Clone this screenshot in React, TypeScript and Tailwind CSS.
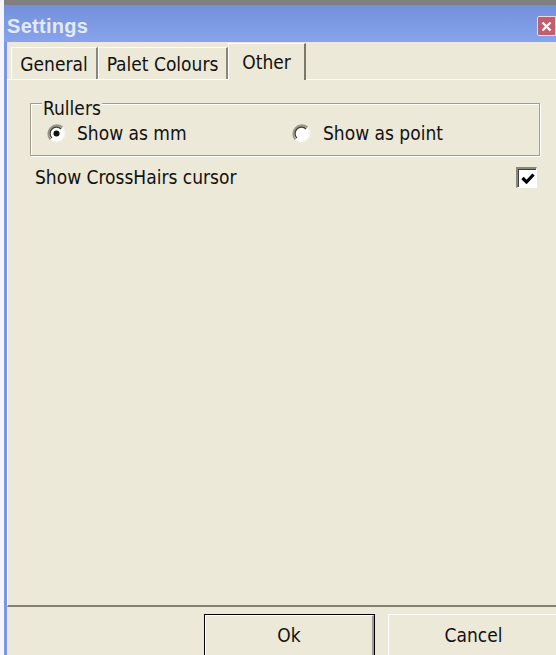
import React from 'react'

const ui = { fontFamily: '"DejaVu Sans Condensed", "Liberation Sans", sans-serif' }

function Radio({ checked }: { checked?: boolean }) {
  return (
    <svg width="19" height="19" viewBox="0 0 19 19" className="shrink-0">
      <circle cx="9.5" cy="9.5" r="8.5" fill="#fff" />
      {/* sunken rim: dark upper-left, light lower-right */}
      <path d="M3.5 15.5 A8.5 8.5 0 0 1 15.5 3.5" fill="none" stroke="#9a9788" strokeWidth="2" />
      <path d="M4.9 14.1 A6.5 6.5 0 0 1 14.1 4.9" fill="none" stroke="#404040" strokeWidth="1.4" />
      <path d="M15.5 3.5 A8.5 8.5 0 0 1 3.5 15.5" fill="none" stroke="#f6f4ec" strokeWidth="1.6" />
      {checked && <circle cx="9.5" cy="9.5" r="3" fill="#111" />}
    </svg>
  )
}

function CheckBox({ checked }: { checked?: boolean }) {
  return (
    <div className="w-[21px] h-[21px] border-t-2 border-l-2 border-[#8a877a] border-r border-b border-r-white border-b-white">
      <div className="w-full h-full bg-white border-t border-l border-[#404040] flex items-center justify-center">
        {checked && (
          <svg width="14" height="13" viewBox="0 0 14 13">
            <path d="M1.5 6 L5.5 10 L12.5 2.5" fill="none" stroke="#000" strokeWidth="3.2" />
          </svg>
        )}
      </div>
    </div>
  )
}

function Tab({ label, active, w }: { label: string; active?: boolean; w: string }) {
  if (active) {
    return (
      <div className={`${w} h-[37px] -mb-px relative z-10 bg-[#ece9d8] border-l border-t border-white border-r-2 border-r-[#7a7868] flex items-start justify-center pt-[7px] leading-[22px]`}>
        {label}
      </div>
    )
  }
  return (
    <div className={`${w} h-[32px] border-l border-t border-white border-r-2 border-r-[#8a877a] flex items-start justify-center pt-[5px] leading-[22px]`}>
      {label}
    </div>
  )
}

export default function App() {
  return (
    <div className="w-[556px] h-[655px] flex bg-white overflow-hidden select-none text-[19px] text-[#111]" style={ui}>
      <div className="w-[4px] shrink-0 bg-[#f4f6fb]" />
      <div className="flex-1 flex flex-col min-w-0 min-h-0">
        <div className="h-[5px] shrink-0 bg-[#808080]" />

        {/* title bar */}
        <div className="h-[37px] shrink-0 flex items-center justify-between bg-gradient-to-b from-[#7490dc] to-[#86a3ec] pl-[3px] pt-[5px]">
          <span className="text-[20px] font-bold text-[#e4eafa] tracking-[0.3px]" style={{ fontFamily: '"Liberation Sans", sans-serif' }}>
            Settings
          </span>
          <div className="w-[19px] h-[20px] bg-[#c25d6d] border border-[#f0d8dc] rounded-l-[2px] flex items-center justify-center">
            <svg width="11" height="11" viewBox="0 0 11 11">
              <path d="M1.5 1.5 L9.5 9.5 M9.5 1.5 L1.5 9.5" stroke="#fff" strokeWidth="2.4" />
            </svg>
          </div>
        </div>

        <div className="flex-1 min-h-0 flex flex-col border-l-[3px] border-[#7b97e3] bg-[#ece9d8]">
          {/* tab strip */}
          <div className="h-[37px] shrink-0 flex items-end pl-[4px]">
            <Tab label="General" w="w-[87px]" />
            <Tab label="Palet Colours" w="w-[130px]" />
            <Tab label="Other" w="w-[78px]" active />
          </div>

          {/* tab page */}
          <div className="h-[528px] shrink-0 border-t border-l border-white border-b-2 border-b-[#858272] pl-[22px] pr-[16px] pt-[23px]">
            <div className="relative h-[53px] border border-[#a09d8e] shadow-[inset_1px_1px_0_#fff,1px_1px_0_#fff] pt-[17px] pl-[16px]">
              <span className="absolute left-[11px] -top-[4px] px-[1px] bg-[#ece9d8] leading-[16px]">Rullers</span>
              <div className="flex items-center h-[24px]">
                <div className="flex items-center gap-[11px] w-[245px]">
                  <Radio checked />
                  <span className="leading-[22px]">Show as mm</span>
                </div>
                <div className="flex items-center gap-[12px]">
                  <Radio />
                  <span className="leading-[22px]">Show as point</span>
                </div>
              </div>
            </div>

            <div className="flex items-center justify-between mt-[10px] pl-[5px] pr-[3px]">
              <span className="leading-[22px]">Show CrossHairs cursor</span>
              <CheckBox checked />
            </div>
          </div>

          {/* dialog buttons */}
          <div className="flex-1 min-h-0 overflow-hidden flex items-start pt-[7px] pl-[197px] gap-[13px]">
            <div className="w-[171px] h-[44px] shrink-0 border border-black">
              <div className="w-full h-full border-t border-l border-white border-b-2 border-r-2 border-b-[#9d9a8b] border-r-[#9d9a8b] flex items-center justify-center">
                Ok
              </div>
            </div>
            <div className="w-[172px] h-[44px] shrink-0 border-t border-l border-white border-b-2 border-r-2 border-b-[#9d9a8b] border-r-[#9d9a8b] flex items-center justify-center">
              Cancel
            </div>
          </div>
        </div>
      </div>
    </div>
  )
}
